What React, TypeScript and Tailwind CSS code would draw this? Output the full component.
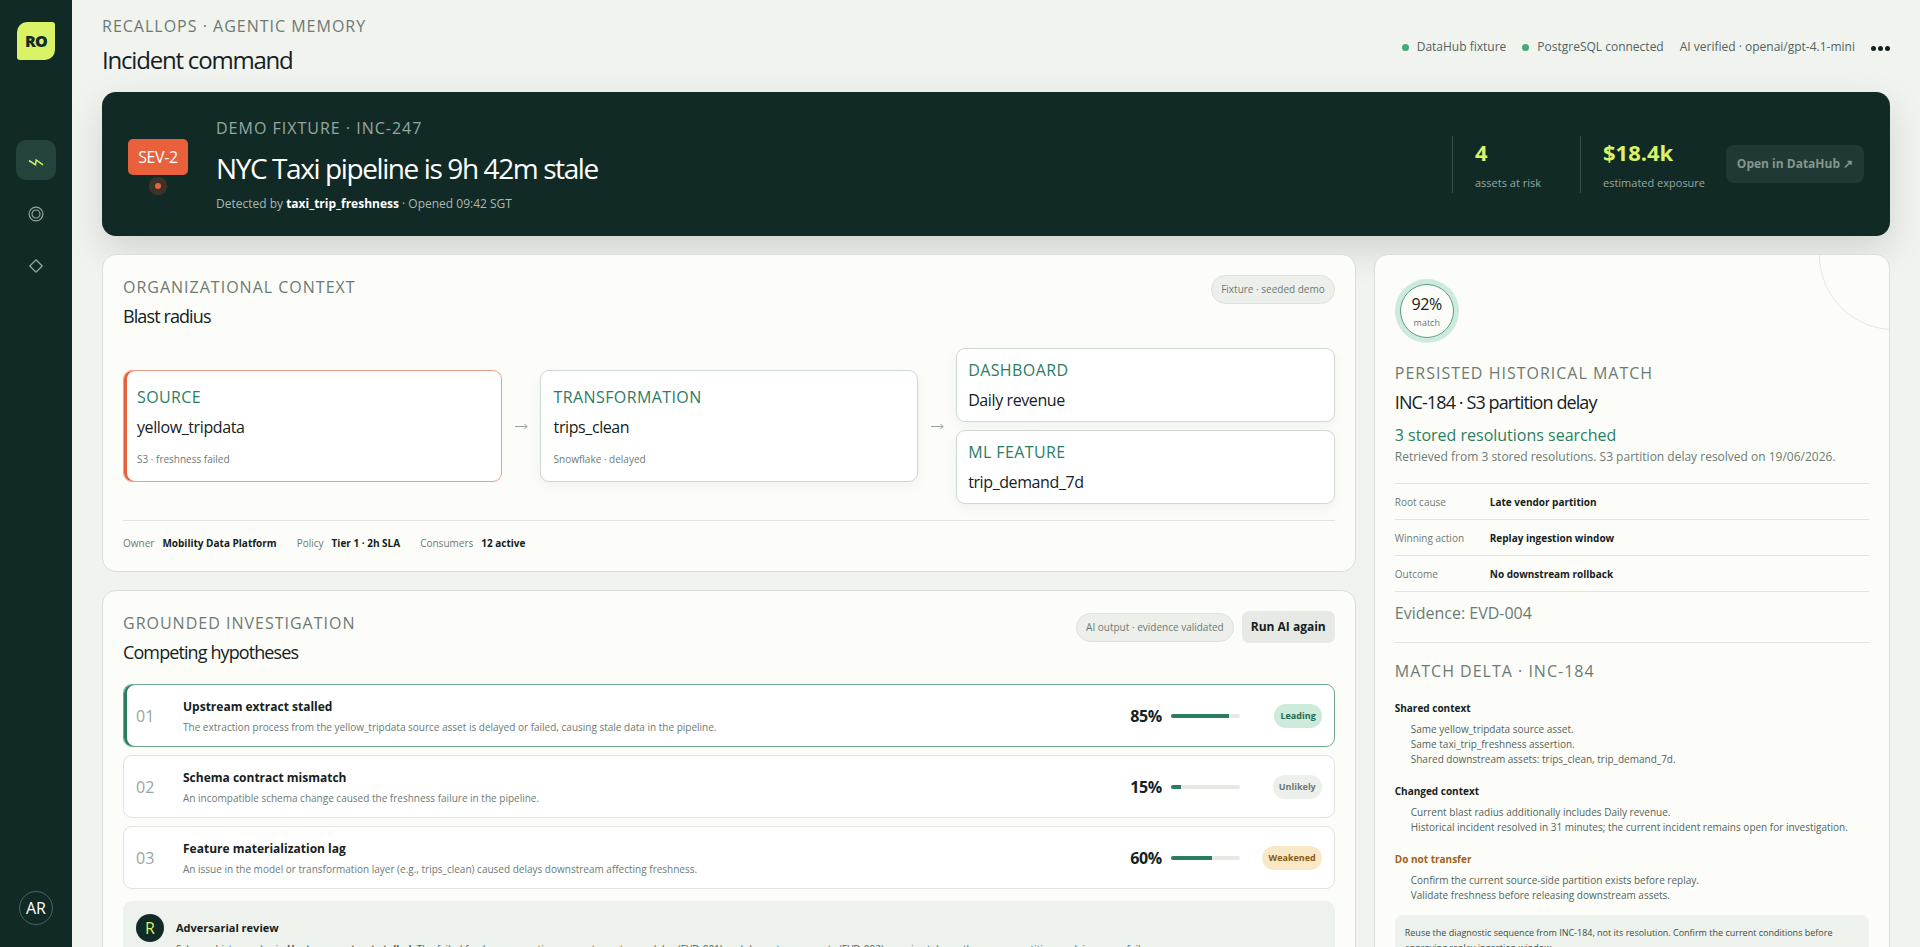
import type { ReactNode } from 'react';
import { clsx } from 'clsx';

const hypotheses = [
    {
        id: '01',
        title: 'Upstream extract stalled',
        detail: 'The extraction process from the yellow_tripdata source asset is delayed or failed, causing stale data in the pipeline.',
        confidence: 85,
        status: 'Leading',
    },
    {
        id: '02',
        title: 'Schema contract mismatch',
        detail: 'An incompatible schema change caused the freshness failure in the pipeline.',
        confidence: 15,
        status: 'Unlikely',
    },
    {
        id: '03',
        title: 'Feature materialization lag',
        detail: 'An issue in the model or transformation layer (e.g., trips_clean) caused delays downstream affecting freshness.',
        confidence: 60,
        status: 'Weakened',
    },
];

const statusStyles: Record<string, string> = {
    Leading: 'bg-[#cdeadb] text-[#1f6a52]',
    Unlikely: 'bg-[#edefea] text-[#6c7a75]',
    Weakened: 'bg-[#f9e8c6] text-[#8a5a14]',
};

const ownership = [
    { label: 'Owner', value: 'Mobility Data Platform' },
    { label: 'Policy', value: 'Tier 1 · 2h SLA' },
    { label: 'Consumers', value: '12 active' },
];

const matchFacts = [
    { label: 'Root cause', value: 'Late vendor partition' },
    { label: 'Winning action', value: 'Replay ingestion window' },
    { label: 'Outcome', value: 'No downstream rollback' },
];

const matchDelta = [
    {
        title: 'Shared context',
        items: [
            'Same yellow_tripdata source asset.',
            'Same taxi_trip_freshness assertion.',
            'Shared downstream assets: trips_clean, trip_demand_7d.',
        ],
    },
    {
        title: 'Changed context',
        items: [
            'Current blast radius additionally includes Daily revenue.',
            'Historical incident resolved in 31 minutes; the current incident remains open for investigation.',
        ],
    },
    {
        title: 'Do not transfer',
        warning: true,
        items: [
            'Confirm the current source-side partition exists before replay.',
            'Validate freshness before releasing downstream assets.',
        ],
    },
];

function Eyebrow({ children, className }: { children: ReactNode; className?: string }) {
    return (
        <p className={clsx('text-base leading-6 tracking-[1px] uppercase', className ?? 'text-[#6c7a75]')}>
            {children}
        </p>
    );
}

function Card({ children, className }: { children: ReactNode; className?: string }) {
    return (
        <section className={clsx('rounded-[14px] border border-[#d9deda] bg-[#fcfdf8] p-5', className)}>
            {children}
        </section>
    );
}

function CardTitle({ children }: { children: ReactNode }) {
    return <h2 className="mt-[5px] text-lg leading-6 tracking-tighter">{children}</h2>;
}

function Pill({ children }: { children: ReactNode }) {
    return (
        <span className="flex h-[29px] items-center rounded-full border border-[#dde2dd] bg-[#edefea] px-[9px] text-[10px] text-[#6c7a75]">
            {children}
        </span>
    );
}

function Sidebar() {
    return (
        <aside className="sticky top-0 flex h-screen w-[72px] shrink-0 flex-col items-center bg-[#122a25] py-[22px]">
            <a
                href="#home"
                className="flex size-[38px] items-center justify-center rounded-tl-[10px] rounded-tr-[3px] rounded-br-[10px] rounded-bl-[3px] bg-[#d9f266] text-base font-extrabold tracking-tighter text-[#122a25]"
            >
                RO
            </a>

            <nav className="mt-20 flex flex-col gap-3">
                <a href="#incident" aria-label="Incident" className="flex size-10 items-center justify-center rounded-[10px] bg-[#24443c] text-[#d9f266]">
                    <svg className="mt-1" width="16" height="9" viewBox="0 0 16 9" fill="none" stroke="currentColor" strokeWidth="1.5">
                        <path d="M1 2.5 L7.5 6.8 L8.2 2 L15 6.8" />
                    </svg>
                </a>
                <a href="#memory" aria-label="Memory" className="flex size-10 items-center justify-center pt-1 text-[#94a8a1]">
                    <svg width="16" height="16" viewBox="0 0 16 16" fill="none" stroke="currentColor" strokeWidth="1.2">
                        <circle cx="8" cy="8" r="6.9" />
                        <circle cx="8" cy="8" r="4" />
                    </svg>
                </a>
                <a href="#actions" aria-label="Actions" className="flex size-10 items-center justify-center pt-1 text-[#94a8a1]">
                    <svg width="16" height="16" viewBox="0 0 16 16" fill="none" stroke="currentColor" strokeWidth="1.3">
                        <path d="M8 1.8 L14.2 8 L8 14.2 L1.8 8 Z" />
                    </svg>
                </a>
            </nav>

            <button className="mt-auto size-[34px] rounded-full border border-[#4c655e] text-base leading-none text-white">
                AR
            </button>
        </aside>
    );
}

function TopBar() {
    return (
        <header className="flex items-center justify-between pt-[14px] pb-4">
            <div>
                <Eyebrow>RecallOps · Agentic memory</Eyebrow>
                <h1 className="mt-[6px] text-2xl leading-8 tracking-tighter">Incident command</h1>
            </div>
            <div className="flex items-center gap-4 pt-1 text-xs text-[#53635e]">
                <span className="flex items-center gap-2">
                    <i className="size-[7px] rounded-full bg-[#45a976]" />
                    DataHub fixture
                </span>
                <span className="flex items-center gap-2">
                    <i className="size-[7px] rounded-full bg-[#45a976]" />
                    PostgreSQL connected
                </span>
                <span>AI verified · openai/gpt-4.1-mini</span>
                <button aria-label="More" className="flex h-6 items-center gap-[2px] pt-[3px]">
                    <i className="size-[5px] rounded-full bg-[#15211e]" />
                    <i className="size-[5px] rounded-full bg-[#15211e]" />
                    <i className="size-[5px] rounded-full bg-[#15211e]" />
                </button>
            </div>
        </header>
    );
}

function Metric({ value, label, className }: { value: string; label: string; className: string }) {
    return (
        <div className={clsx('border-l border-[#35504a] pt-[2px] pb-[2px] pl-[22px]', className)}>
            <strong className="block text-[22px] leading-7 text-[#d9f266]">{value}</strong>
            <span className="mt-[9px] block text-[11px] leading-4 whitespace-nowrap text-[#94a8a1]">{label}</span>
        </div>
    );
}

function IncidentHero() {
    return (
        <section className="flex items-center rounded-[14px] bg-[#122a25] px-[26px] py-6 text-white shadow-[0_14px_36px_rgba(18,42,37,0.15)]">
            <div className="flex w-[60px] flex-col items-center">
                <span className="flex h-9 w-full items-center justify-center rounded-[5px] bg-[#e8613c] text-base tracking-tight">
                    SEV-2
                </span>
                <i className="mt-2 size-[6px] rounded-full bg-[#e8613c] ring-[6px] ring-[#e8613c]/20" />
            </div>

            <div className="ml-7 flex-1">
                <Eyebrow className="text-[#94a8a1]">Demo fixture · INC-247</Eyebrow>
                <h2 className="mt-[10px] text-[28px] leading-9 tracking-tighter">NYC Taxi pipeline is 9h 42m stale</h2>
                <p className="mt-[10px] text-xs leading-4 text-[#a9b8b2]">
                    Detected by <b className="text-white">taxi_trip_freshness</b> · Opened 09:42 SGT
                </p>
            </div>

            <Metric value="4" label="assets at risk" className="w-32" />
            <Metric value="$18.4k" label="estimated exposure" className="w-[118px]" />
            <button disabled className="ml-7 h-[38px] w-[138px] rounded-lg bg-[#1f3a34] text-xs font-bold whitespace-nowrap text-[#85958f]">
                Open in DataHub ↗
            </button>
        </section>
    );
}

function FlowArrow() {
    return (
        <svg className="mx-auto text-[#94a39d]" width="14" height="8" viewBox="0 0 14 8" fill="none" stroke="currentColor">
            <path d="M1 4.5 H13 M10.5 2 L13 4.5 L10.5 7" />
        </svg>
    );
}

function AssetNode({ kind, name, note, failed }: { kind: string; name: string; note?: string; failed?: boolean }) {
    return (
        <div
            className={clsx(
                'rounded-[9px] border bg-white',
                note ? 'px-[13px] py-[14px]' : 'px-[11px] py-[9px]',
                failed
                    ? 'border-[#ef9d86] shadow-[inset_3px_0_0_#e8613c]'
                    : 'border-[#cfd8d3] shadow-[0_4px_12px_rgba(18,42,37,0.05)]'
            )}
        >
            <p className="text-base leading-6 tracking-wide text-[#2b7d62] uppercase">{kind}</p>
            <p className="mt-[6px] text-base leading-6 tracking-tight">{name}</p>
            {note && <p className="mt-3 text-[10px] leading-4 text-[#6c7a75]">{note}</p>}
        </div>
    );
}

function BlastRadius() {
    return (
        <Card>
            <div className="flex items-start justify-between">
                <div>
                    <Eyebrow>Organizational context</Eyebrow>
                    <CardTitle>Blast radius</CardTitle>
                </div>
                <Pill>Fixture · seeded demo</Pill>
            </div>

            <div className="mt-5 grid grid-cols-[1fr_38px_1fr_38px_1fr] items-center">
                <AssetNode kind="Source" name="yellow_tripdata" note="S3 · freshness failed" failed />
                <FlowArrow />
                <AssetNode kind="Transformation" name="trips_clean" note="Snowflake · delayed" />
                <FlowArrow />
                <div className="flex flex-col gap-2">
                    <AssetNode kind="Dashboard" name="Daily revenue" />
                    <AssetNode kind="ML feature" name="trip_demand_7d" />
                </div>
            </div>

            <dl className="mt-4 flex gap-5 border-t border-[#dfe4e0] pt-[14px] text-[10px] leading-4">
                {ownership.map((item) => (
                    <div key={item.label} className="flex gap-2">
                        <dt className="text-[#6c7a75]">{item.label}</dt>
                        <dd className="font-bold">{item.value}</dd>
                    </div>
                ))}
            </dl>
        </Card>
    );
}

function Investigation() {
    return (
        <Card>
            <div className="flex items-start justify-between">
                <div>
                    <Eyebrow>Grounded investigation</Eyebrow>
                    <CardTitle>Competing hypotheses</CardTitle>
                </div>
                <div className="flex items-center gap-2">
                    <Pill>AI output · evidence validated</Pill>
                    <button className="h-8 rounded-[7px] bg-[#e7eae4] px-[9px] text-xs font-bold">Run AI again</button>
                </div>
            </div>

            <div className="mt-5 flex flex-col gap-2">
                {hypotheses.map((item) => (
                    <article
                        key={item.id}
                        className={clsx(
                            'flex h-[63px] items-center rounded-[9px] border bg-white px-3',
                            item.status === 'Leading'
                                ? 'border-[#6fa996] shadow-[inset_3px_0_0_#2b7d62]'
                                : 'border-[#dfe4e0]'
                        )}
                    >
                        <span className="w-[47px] text-base text-[#9aa5a1]">{item.id}</span>
                        <div className="flex-1">
                            <h3 className="text-xs leading-5 font-bold">{item.title}</h3>
                            <p className="mt-[2px] text-[10px] leading-4 text-[#6c7a75]">{item.detail}</p>
                        </div>
                        <strong className="text-base tracking-tight">{item.confidence}%</strong>
                        <div className="ml-[9px] h-1 w-[69px] overflow-hidden rounded-full bg-[#e5e8e3]">
                            <div className="h-full bg-[#2b7d62]" style={{ width: `${item.confidence}%` }} />
                        </div>
                        <div className="flex w-[82px] justify-end">
                            <span className={clsx('flex h-6 items-center rounded-full px-[6px] text-[9px] font-bold', statusStyles[item.status])}>
                                {item.status}
                            </span>
                        </div>
                    </article>
                ))}
            </div>

            <div className="mt-3 flex gap-3 rounded-[9px] bg-[#edf2ec] p-[13px]">
                <span className="flex size-7 shrink-0 items-center justify-center rounded-full bg-[#122a25] text-base text-[#d9f266]">
                    R
                </span>
                <div className="pt-[6px]">
                    <h3 className="text-[11px] leading-4 font-bold">Adversarial review</h3>
                    <p className="mt-[5px] text-[10px] leading-4 text-[#53635e]">
                        Schema history rules in <b>Upstream extract stalled</b>. The failed freshness assertion supports upstream delay (EVD-001) and downstream assets (EVD-002) remain stale, so the source partition explains every failure.
                    </p>
                </div>
            </div>
        </Card>
    );
}

function HistoricalMatch() {
    return (
        <Card className="relative overflow-hidden">
            {/* Corner ring */}
            <div className="absolute -top-[75px] -right-20 size-[150px] rounded-full border border-[#dfe8e1]" />

            <div className="mt-[9px] ml-[5px] flex size-[54px] flex-col items-center justify-center rounded-full border border-[#4f9c80] ring-[5px] ring-[#cdeadb]">
                <span className="text-base leading-5 tracking-tight">92%</span>
                <span className="mt-[3px] text-[9px] leading-3 text-[#6c7a75]">match</span>
            </div>

            <Eyebrow className="mt-[23px] text-[#6c7a75]">Persisted historical match</Eyebrow>
            <CardTitle>INC-184 · S3 partition delay</CardTitle>
            <p className="mt-[9px] text-base leading-6 text-[#2b7d62]">3 stored resolutions searched</p>
            <p className="text-xs leading-5 text-[#6c7a75]">
                Retrieved from 3 stored resolutions. S3 partition delay resolved on 19/06/2026.
            </p>

            <dl className="mt-4 border-b border-[#dfe4e0] text-[10px]">
                {matchFacts.map((fact) => (
                    <div key={fact.label} className="flex h-9 items-center border-t border-[#dfe4e0] pt-[2px]">
                        <dt className="w-[95px] text-[#6c7a75]">{fact.label}</dt>
                        <dd className="font-bold">{fact.value}</dd>
                    </div>
                ))}
            </dl>
            <p className="mt-[9px] text-base leading-6 text-[#6c7a75]">Evidence: EVD-004</p>

            <div className="mt-[17px] border-t border-[#dfe4e0] pt-4">
                <Eyebrow>Match delta · INC-184</Eyebrow>
                <div className="mt-[17px] flex flex-col gap-4">
                    {matchDelta.map((group) => (
                        <div key={group.title}>
                            <h3 className={clsx('text-[10px] leading-4 font-bold', group.warning && 'text-[#a3621b]')}>
                                {group.title}
                            </h3>
                            <ul className="mt-[6px] pl-4 text-[10px] leading-[15px] text-[#53635e]">
                                {group.items.map((item) => (
                                    <li key={item}>{item}</li>
                                ))}
                            </ul>
                        </div>
                    ))}
                </div>
                <p className="mt-3 rounded-lg bg-[#edf2ec] p-[10px] text-[9px] leading-[15px] text-[#3c4d47]">
                    Reuse the diagnostic sequence from INC-184, not its resolution. Confirm the current conditions before approving replay ingestion window.
                </p>
            </div>
        </Card>
    );
}

export default function App() {
    return (
        <div className="flex min-h-screen bg-[#f1f3ee] font-['Open_Sans','Noto_Sans',sans-serif] text-[#15211e]">
            <Sidebar />
            <main className="min-w-0 flex-1 px-[30px] pb-8">
                <TopBar />
                <IncidentHero />
                <div className="relative mt-[18px] grid grid-cols-[1.7fr_0.7fr] gap-[18px]">
                    <div className="flex min-w-0 flex-col gap-[18px]">
                        <BlastRadius />
                        <Investigation />
                    </div>
                    <HistoricalMatch />
                </div>
            </main>
        </div>
    );
}
